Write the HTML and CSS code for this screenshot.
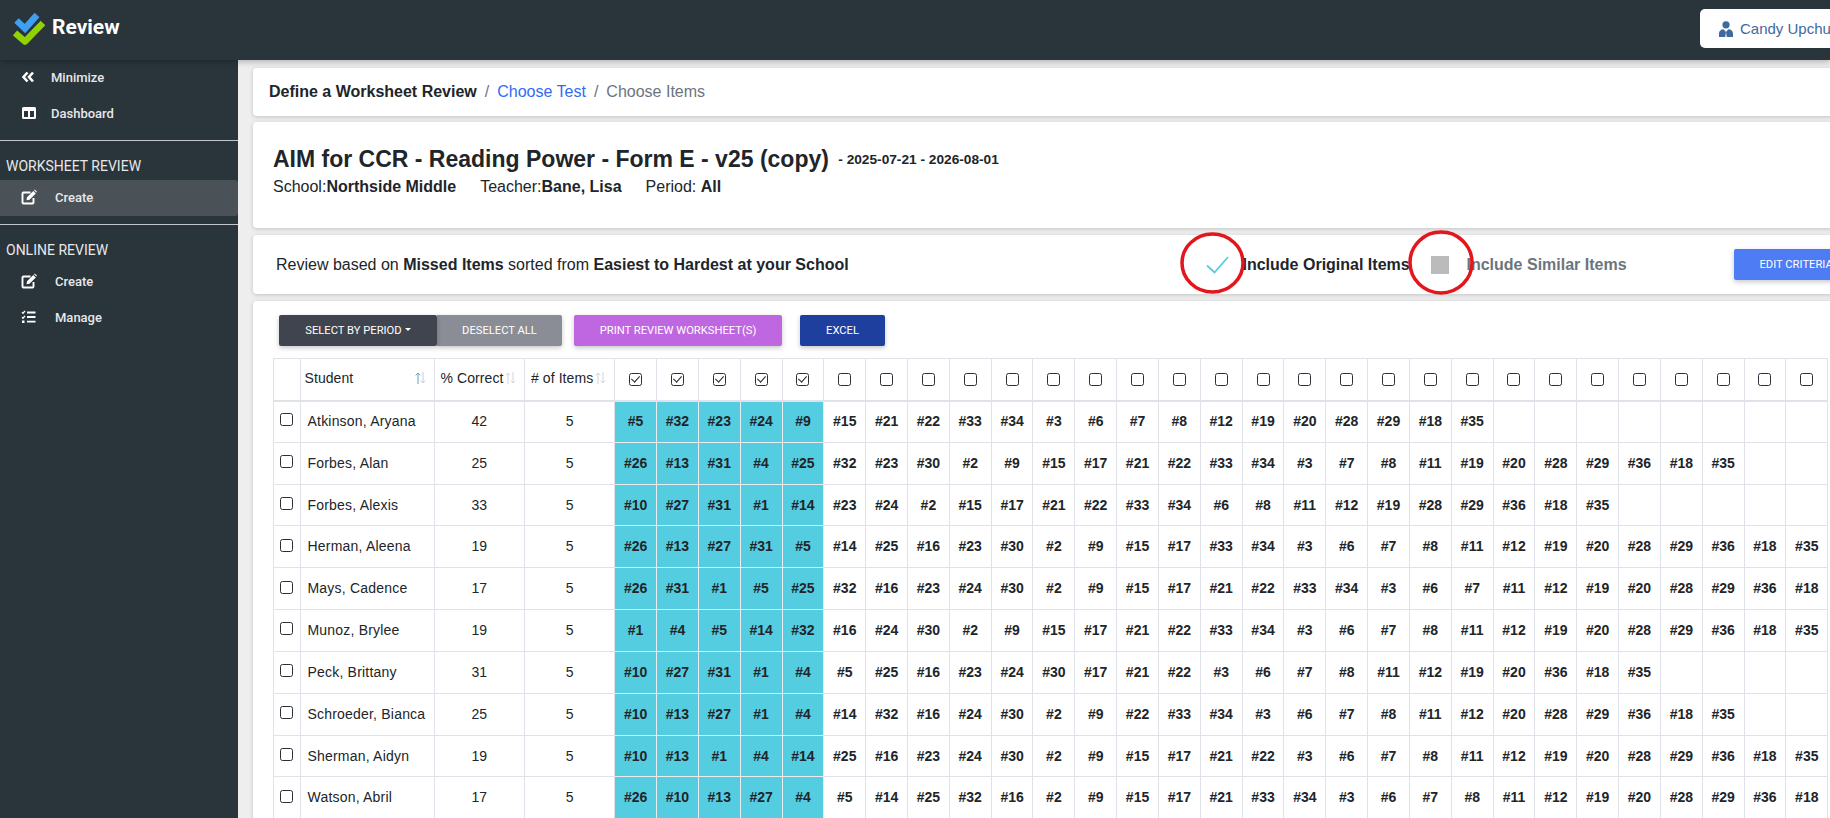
FILE: index.html
```html
<!DOCTYPE html>
<html lang="en">
<head>
<meta charset="utf-8">
<title>Review</title>
<link rel="stylesheet" href="styles.css">
</head>
<body>
<header class="topbar">
  <div class="brand">
    <svg class="logo" width="34" height="34" viewBox="0 0 34 34"><path d="M3.5 8.5 12 16.5 24 3" fill="none" stroke="#3f9ff0" stroke-width="6.5"/><path d="M2 21 12 29.5 30 11" fill="none" stroke="#8fd400" stroke-width="6.5" stroke-linejoin="round"/></svg>
    <span class="brand-name">Review</span>
  </div>
  <button class="user-btn">
    <svg width="14" height="16" viewBox="0 0 14 16"><circle cx="7" cy="3.8" r="3.6" fill="#3f6a9e"/><path d="M0 16v-3.5C0 9.8 2 8.2 4.6 8.2L7 11l2.4-2.8C12 8.2 14 9.8 14 12.5V16z" fill="#3f6a9e"/><path d="M7 11l-.8 5h1.6z" fill="#fff"/></svg>
    <span>Candy Upchurch</span>
  </button>
</header>
<div class="layout">
  <aside class="sidebar">
    <a class="nav-item top-item first"><svg class="nav-icon" width="16" height="14" viewBox="0 0 16 14"><path d="M6.5 2.5 2.5 7l4 4.5M12 2.5 8 7l4 4.5" fill="none" stroke="#fff" stroke-width="2.6"/></svg><span>Minimize</span></a>
    <a class="nav-item top-item"><svg class="nav-icon" width="16" height="14" viewBox="0 0 16 14"><path fill-rule="evenodd" d="M2.5 1h11A1.5 1.5 0 0 1 15 2.5v9a1.5 1.5 0 0 1-1.500 1.500h-11A1.500 1.500 0 0 1 1 11.500v-9A1.500 1.500 0 0 1 2.500 1zM3 5v6h4V5zm6 0v6h4V5z" fill="#fff"/></svg><span>Dashboard</span></a>
    <hr class="nav-rule">
    <div class="nav-heading">WORKSHEET REVIEW</div>
    <a class="nav-item sub-item active"><svg class="nav-icon" width="16" height="16" viewBox="0 0 16 16"><path d="M9.500 3.500H2.500a1.300 1.300 0 0 0-1 1v9a1.300 1.300 0 0 0 1 1h9a1.300 1.300 0 0 0 1-1V9" fill="none" stroke="#fff" stroke-width="1.900"/><path d="M6 8.200 12.300 1.900 14.800 4.400 8.500 10.700 5.500 11.200zM13 1.200l.8-.7 2.200 2.200-.7.9z" fill="#fff"/></svg><span>Create</span></a>
    <hr class="nav-rule rule-two">
    <div class="nav-heading">ONLINE REVIEW</div>
    <a class="nav-item sub-item"><svg class="nav-icon" width="16" height="16" viewBox="0 0 16 16"><path d="M9.500 3.500H2.500a1.300 1.300 0 0 0-1 1v9a1.300 1.300 0 0 0 1 1h9a1.300 1.300 0 0 0 1-1V9" fill="none" stroke="#fff" stroke-width="1.900"/><path d="M6 8.200 12.300 1.900 14.800 4.400 8.500 10.700 5.500 11.200zM13 1.200l.8-.7 2.200 2.200-.7.9z" fill="#fff"/></svg><span>Create</span></a>
    <a class="nav-item sub-item"><svg class="nav-icon" width="16" height="14" viewBox="0 0 16 14"><path d="M1 2.200l1 1L4 .8M1 7.200l1 1L4 5.800" fill="none" stroke="#fff" stroke-width="1.300"/><rect x="1" y="10.500" width="2.500" height="2.500" fill="#fff"/><path d="M6 2.500h8.500M6 7h8.500M6 11.700h8.500" stroke="#fff" stroke-width="1.800"/></svg><span>Manage</span></a>
  </aside>
  <main class="content">
    <nav class="card crumbs">
      <strong>Define a Worksheet Review</strong><span class="sep">/</span><a class="crumb-link">Choose Test</a><span class="sep">/</span><span class="crumb-current">Choose Items</span>
    </nav>
    <section class="card title-card">
      <h1>AIM for CCR - Reading Power - Form E - v25 (copy) <small>- 2025-07-21 - 2026-08-01</small></h1>
      <p class="meta"><span>School:<b>Northside Middle</b></span><span>Teacher:<b>Bane, Lisa</b></span><span>Period: <b>All</b></span></p>
    </section>
    <section class="card criteria">
      <p class="criteria-text">Review based on <b>Missed Items</b> sorted from <b>Easiest to Hardest at your School</b></p>
      <div class="toggle toggle-on">
        <svg class="ring ring-one" width="65" height="62" viewBox="0 0 65 62"><ellipse cx="32.500" cy="31" rx="30.500" ry="29" fill="none" stroke="#e2161c" stroke-width="3.500"/></svg>
        <svg class="tick" width="23" height="18" viewBox="0 0 23 18"><path d="M1 9.500 8.500 16.500 22 1" fill="none" stroke="#55cde0" stroke-width="1.800"/></svg>
        <span>Include Original Items</span>
      </div>
      <div class="toggle toggle-off">
        <svg class="ring ring-two" width="66" height="65" viewBox="0 0 66 65"><ellipse cx="33" cy="32.500" rx="31" ry="30.500" fill="none" stroke="#e2161c" stroke-width="3.500"/></svg>
        <i class="box"></i>
        <span>Include Similar Items</span>
      </div>
      <button class="btn btn-edit">EDIT CRITERIA</button>
    </section>
    <section class="card table-card">
      <div class="toolbar">
        <div class="btn-group">
          <button class="btn btn-dark">SELECT BY PERIOD<i class="caret"></i></button>
          <button class="btn btn-grey">DESELECT ALL</button>
        </div>
        <button class="btn btn-print">PRINT REVIEW WORKSHEET(S)</button>
        <button class="btn btn-excel">EXCEL</button>
      </div>
      <table class="grid">
        <colgroup><col class="c-check"><col class="c-name"><col class="c-pct"><col class="c-count"><col class="c-item"><col class="c-item"><col class="c-item"><col class="c-item"><col class="c-item"><col class="c-item"><col class="c-item"><col class="c-item"><col class="c-item"><col class="c-item"><col class="c-item"><col class="c-item"><col class="c-item"><col class="c-item"><col class="c-item"><col class="c-item"><col class="c-item"><col class="c-item"><col class="c-item"><col class="c-item"><col class="c-item"><col class="c-item"><col class="c-item"><col class="c-item"><col class="c-item"><col class="c-item"><col class="c-item"><col class="c-item"><col class="c-item"></colgroup>
        <thead>
          <tr>
            <th></th>
            <th><div class="th-flex th-student"><span>Student</span><svg width="11" height="12" viewBox="0 0 11 12"><path d="M3 12V1M.8 3.400 3 1l2.200 2.400" fill="none" stroke="#5fa8c0" stroke-width="1"/><path d="M8 0v11M5.800 8.600 8 11l2.200-2.400" fill="none" stroke="#c9ccd2" stroke-width="1"/></svg></div></th>
            <th><div class="th-flex"><span>% Correct</span><svg width="11" height="12" viewBox="0 0 11 12"><path d="M3 12V1M.8 3.400 3 1l2.200 2.400M8 0v11M5.800 8.600 8 11l2.200-2.400" fill="none" stroke="#d3d5da" stroke-width="1"/></svg></div></th>
            <th><div class="th-flex"><span># of Items</span><svg width="11" height="12" viewBox="0 0 11 12"><path d="M3 12V1M.8 3.400 3 1l2.200 2.400M8 0v11M5.800 8.600 8 11l2.200-2.400" fill="none" stroke="#d3d5da" stroke-width="1"/></svg></div></th>
            <th><input type="checkbox" checked></th><th><input type="checkbox" checked></th><th><input type="checkbox" checked></th><th><input type="checkbox" checked></th><th><input type="checkbox" checked></th>
            <th><input type="checkbox"></th><th><input type="checkbox"></th><th><input type="checkbox"></th><th><input type="checkbox"></th><th><input type="checkbox"></th><th><input type="checkbox"></th><th><input type="checkbox"></th><th><input type="checkbox"></th>
            <th><input type="checkbox"></th><th><input type="checkbox"></th><th><input type="checkbox"></th><th><input type="checkbox"></th><th><input type="checkbox"></th><th><input type="checkbox"></th><th><input type="checkbox"></th><th><input type="checkbox"></th>
            <th><input type="checkbox"></th><th><input type="checkbox"></th><th><input type="checkbox"></th><th><input type="checkbox"></th><th><input type="checkbox"></th><th><input type="checkbox"></th><th><input type="checkbox"></th><th><input type="checkbox"></th>
          </tr>
        </thead>
        <tbody>
          <tr><td class="pick"><input type="checkbox"></td><td class="name">Atkinson, Aryana</td><td class="num">42</td><td class="num">5</td><td class="on">#5</td><td class="on">#32</td><td class="on">#23</td><td class="on">#24</td><td class="on">#9</td><td>#15</td><td>#21</td><td>#22</td><td>#33</td><td>#34</td><td>#3</td><td>#6</td><td>#7</td><td>#8</td><td>#12</td><td>#19</td><td>#20</td><td>#28</td><td>#29</td><td>#18</td><td>#35</td><td></td><td></td><td></td><td></td><td></td><td></td><td></td><td></td></tr>
          <tr><td class="pick"><input type="checkbox"></td><td class="name">Forbes, Alan</td><td class="num">25</td><td class="num">5</td><td class="on">#26</td><td class="on">#13</td><td class="on">#31</td><td class="on">#4</td><td class="on">#25</td><td>#32</td><td>#23</td><td>#30</td><td>#2</td><td>#9</td><td>#15</td><td>#17</td><td>#21</td><td>#22</td><td>#33</td><td>#34</td><td>#3</td><td>#7</td><td>#8</td><td>#11</td><td>#19</td><td>#20</td><td>#28</td><td>#29</td><td>#36</td><td>#18</td><td>#35</td><td></td><td></td></tr>
          <tr><td class="pick"><input type="checkbox"></td><td class="name">Forbes, Alexis</td><td class="num">33</td><td class="num">5</td><td class="on">#10</td><td class="on">#27</td><td class="on">#31</td><td class="on">#1</td><td class="on">#14</td><td>#23</td><td>#24</td><td>#2</td><td>#15</td><td>#17</td><td>#21</td><td>#22</td><td>#33</td><td>#34</td><td>#6</td><td>#8</td><td>#11</td><td>#12</td><td>#19</td><td>#28</td><td>#29</td><td>#36</td><td>#18</td><td>#35</td><td></td><td></td><td></td><td></td><td></td></tr>
          <tr><td class="pick"><input type="checkbox"></td><td class="name">Herman, Aleena</td><td class="num">19</td><td class="num">5</td><td class="on">#26</td><td class="on">#13</td><td class="on">#27</td><td class="on">#31</td><td class="on">#5</td><td>#14</td><td>#25</td><td>#16</td><td>#23</td><td>#30</td><td>#2</td><td>#9</td><td>#15</td><td>#17</td><td>#33</td><td>#34</td><td>#3</td><td>#6</td><td>#7</td><td>#8</td><td>#11</td><td>#12</td><td>#19</td><td>#20</td><td>#28</td><td>#29</td><td>#36</td><td>#18</td><td>#35</td></tr>
          <tr><td class="pick"><input type="checkbox"></td><td class="name">Mays, Cadence</td><td class="num">17</td><td class="num">5</td><td class="on">#26</td><td class="on">#31</td><td class="on">#1</td><td class="on">#5</td><td class="on">#25</td><td>#32</td><td>#16</td><td>#23</td><td>#24</td><td>#30</td><td>#2</td><td>#9</td><td>#15</td><td>#17</td><td>#21</td><td>#22</td><td>#33</td><td>#34</td><td>#3</td><td>#6</td><td>#7</td><td>#11</td><td>#12</td><td>#19</td><td>#20</td><td>#28</td><td>#29</td><td>#36</td><td>#18</td></tr>
          <tr><td class="pick"><input type="checkbox"></td><td class="name">Munoz, Brylee</td><td class="num">19</td><td class="num">5</td><td class="on">#1</td><td class="on">#4</td><td class="on">#5</td><td class="on">#14</td><td class="on">#32</td><td>#16</td><td>#24</td><td>#30</td><td>#2</td><td>#9</td><td>#15</td><td>#17</td><td>#21</td><td>#22</td><td>#33</td><td>#34</td><td>#3</td><td>#6</td><td>#7</td><td>#8</td><td>#11</td><td>#12</td><td>#19</td><td>#20</td><td>#28</td><td>#29</td><td>#36</td><td>#18</td><td>#35</td></tr>
          <tr><td class="pick"><input type="checkbox"></td><td class="name">Peck, Brittany</td><td class="num">31</td><td class="num">5</td><td class="on">#10</td><td class="on">#27</td><td class="on">#31</td><td class="on">#1</td><td class="on">#4</td><td>#5</td><td>#25</td><td>#16</td><td>#23</td><td>#24</td><td>#30</td><td>#17</td><td>#21</td><td>#22</td><td>#3</td><td>#6</td><td>#7</td><td>#8</td><td>#11</td><td>#12</td><td>#19</td><td>#20</td><td>#36</td><td>#18</td><td>#35</td><td></td><td></td><td></td><td></td></tr>
          <tr><td class="pick"><input type="checkbox"></td><td class="name">Schroeder, Bianca</td><td class="num">25</td><td class="num">5</td><td class="on">#10</td><td class="on">#13</td><td class="on">#27</td><td class="on">#1</td><td class="on">#4</td><td>#14</td><td>#32</td><td>#16</td><td>#24</td><td>#30</td><td>#2</td><td>#9</td><td>#22</td><td>#33</td><td>#34</td><td>#3</td><td>#6</td><td>#7</td><td>#8</td><td>#11</td><td>#12</td><td>#20</td><td>#28</td><td>#29</td><td>#36</td><td>#18</td><td>#35</td><td></td><td></td></tr>
          <tr><td class="pick"><input type="checkbox"></td><td class="name">Sherman, Aidyn</td><td class="num">19</td><td class="num">5</td><td class="on">#10</td><td class="on">#13</td><td class="on">#1</td><td class="on">#4</td><td class="on">#14</td><td>#25</td><td>#16</td><td>#23</td><td>#24</td><td>#30</td><td>#2</td><td>#9</td><td>#15</td><td>#17</td><td>#21</td><td>#22</td><td>#3</td><td>#6</td><td>#7</td><td>#8</td><td>#11</td><td>#12</td><td>#19</td><td>#20</td><td>#28</td><td>#29</td><td>#36</td><td>#18</td><td>#35</td></tr>
          <tr><td class="pick"><input type="checkbox"></td><td class="name">Watson, Abril</td><td class="num">17</td><td class="num">5</td><td class="on">#26</td><td class="on">#10</td><td class="on">#13</td><td class="on">#27</td><td class="on">#4</td><td>#5</td><td>#14</td><td>#25</td><td>#32</td><td>#16</td><td>#2</td><td>#9</td><td>#15</td><td>#17</td><td>#21</td><td>#33</td><td>#34</td><td>#3</td><td>#6</td><td>#7</td><td>#8</td><td>#11</td><td>#12</td><td>#19</td><td>#20</td><td>#28</td><td>#29</td><td>#36</td><td>#18</td></tr>
        </tbody>
      </table>
    </section>
  </main>
</div>
</body>
</html>
```
FILE: styles.css
```css
* { box-sizing: border-box; }
html, body { margin: 0; height: 818px; overflow: hidden; }
body { width: 1830px; background: #eeeeee; font-family: "Liberation Sans", Arial, sans-serif; color: #212529; font-size: 14px; }

.topbar { height: 60px; background: #2a343b; display: flex; align-items: flex-start; justify-content: space-between; position: relative; z-index: 2; box-shadow: 0 2px 6px rgba(0,0,0,.25); }
.brand { display: flex; align-items: center; padding: 12px 0 0 13px; }
.logo { display: block; }
.brand-name { font-family: Roboto, sans-serif; font-weight: 700; font-size: 21px; color: #fff; margin-left: 5px; margin-top: -5px; }
.user-btn { margin-top: 9px; width: 200px; height: 39px; margin-right: -70px; border: 0; border-radius: 5px; background: #fff; display: flex; align-items: center; gap: 7px; padding: 0 0 0 19px; font: 15px "Liberation Sans", Arial, sans-serif; color: #3f6a9e; white-space: nowrap; }

.layout { display: flex; height: 758px; }
.sidebar { flex: none; width: 238px; background: #2a343b; color: #e9ecef; font-family: Roboto, sans-serif; padding-top: 0; }
.nav-item { display: flex; align-items: center; height: 36px; font-size: 13px; font-weight: 500; padding-left: 21px; padding-bottom: 2px; color: #e6e8ea; }
.nav-icon { flex: none; }
.top-item span { margin-left: 14px; }
.sub-item span { margin-left: 18px; }
.active { background: #4a5258; border-radius: 0 3px 3px 0; }
.nav-rule { margin: 8px 0 0; border: 0; border-top: 1px solid #c4c7ca; height: 1px; }
.rule-two { margin-top: 8px; }
.nav-heading { font-size: 14px; height: 39px; line-height: 50px; padding-left: 6px; color: #e6e8ea; }

.content { flex: none; width: 1700px; padding: 8px 0 0 15px; }
.card { background: #fff; border-radius: 4px; box-shadow: 0 1px 4px rgba(0,0,0,.18); margin-bottom: 6px; }

.crumbs { height: 48px; display: flex; align-items: center; padding-left: 16px; font-size: 16px; }
.crumbs strong { color: #212529; }
.sep { color: #6c757d; margin: 0 8px; }
.crumb-link { color: #2f6cf6; }
.crumb-current { color: #6c757d; }

.title-card { height: 106px; padding: 24px 0 0 20px; }
h1 { margin: 0; font-size: 23px; line-height: 26px; font-weight: 700; color: #212529; }
h1 small { font-size: 13.700px; font-weight: 700; vertical-align: 3px; margin-left: 3px; }
.meta { margin: 5px 0 0; font-size: 16px; display: flex; gap: 24px; }

.criteria { height: 59px; margin-top: 7px; margin-bottom: 7px; display: flex; align-items: center; position: relative; padding-left: 23px; }
.criteria-text { margin: 0; font-size: 16px; width: 929.500px; flex: none; }
.toggle { position: relative; display: flex; align-items: center; font-size: 16px; font-weight: 700; flex: none; }
.toggle-on { width: 225px; }
.toggle-off { color: #6c757d; width: 303px; }
.tick { flex: none; margin-right: 14px; }
.box { flex: none; width: 18px; height: 18px; background: #bbbbbb; margin-right: 18px; }
.ring { position: absolute; max-width: none; }
.ring-one { left: -26px; top: -24px; }
.ring-two { left: -23px; top: -26px; }

.btn { border: 0; border-radius: 2px; font-family: Roboto, sans-serif; font-size: 11.200px; font-weight: 400; color: #fff; height: 31px; display: inline-flex; align-items: center; justify-content: center; box-shadow: 0 2px 5px rgba(0,0,0,.22); padding: 0; }
.btn-edit { width: 130px; flex: none; background: #4d7cf5; padding: 0 0 0 26px; justify-content: flex-start; white-space: nowrap; }

.table-card { padding: 14px 0 0 20px; height: 520px; }
.toolbar { display: flex; margin-left: 6px; height: 31px; }
.btn-group { display: flex; margin-right: 12px; }
.btn-dark { width: 158px; background: #40444f; position: relative; z-index: 1; }
.btn-grey { width: 125px; background: #8a8d96; border-radius: 0 2px 2px 0; }
.caret { display: inline-block; margin-left: 3px; margin-bottom: 3px; border-top: 3.500px solid #fff; border-left: 3px solid transparent; border-right: 3px solid transparent; }
.btn-print { width: 208px; background: #bf67e0; margin-right: 18px; }
.btn-excel { width: 85px; background: #1f3f9f; }

.grid { margin-top: 12px; table-layout: fixed; width: 1554.200px; border-collapse: collapse; color: #212529; }
.c-check { width: 26.500px; }
.c-name { width: 134px; }
.c-pct { width: 90.500px; }
.c-count { width: 90.200px; }
.c-item { width: 41.830px; }
.grid th, .grid td { border: 1px solid #dfe2e8; padding: 0 0 1px; text-align: center; font-size: 14px; }
.grid th { height: 42px; font-weight: 400; border-bottom-width: 2px; padding-bottom: 3px; }
.grid td { height: 41.840px; font-weight: 700; }
.grid input { appearance: none; margin: 0; display: inline-block; vertical-align: middle; width: 13px; height: 13px; border: 1.500px solid #2b2f35; border-radius: 2.500px; background: #fff; position: relative; }
.grid input:checked::after { content: ""; position: absolute; left: 3px; top: .5px; width: 4px; height: 7px; border: solid #22262b; border-width: 0 1.500px 1.500px 0; transform: rotate(42deg); }
.th-flex { display: flex; align-items: center; gap: 2px; padding-left: 6px; white-space: nowrap; letter-spacing: .08px; }
.th-student { padding-left: 4px; padding-right: 8px; justify-content: space-between; }
.grid td.on { background: #55cde0; border-color: #e9edf0; }
.grid td.name { font-weight: 400; text-align: left; padding-left: 7px; white-space: nowrap; letter-spacing: .2px; }
.grid td.num { font-weight: 400; }
.grid td.pick { padding-bottom: 6px; }
```
